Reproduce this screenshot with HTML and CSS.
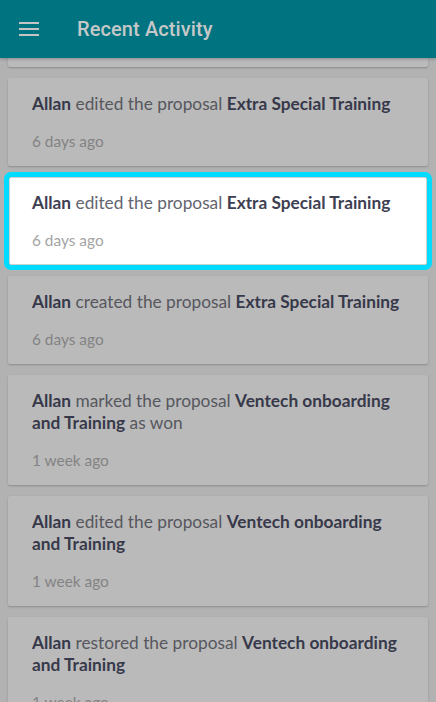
FILE: index.html
```html
<!DOCTYPE html>
<html>
<head>
<meta charset="utf-8">
<link rel="stylesheet" href="styles.css">
</head>
<body>
<header class="appbar">
  <svg class="menu" width="20" height="14" viewBox="0 0 20 14"><rect x="0" y="0" width="20" height="2"/><rect x="0" y="6" width="20" height="2"/><rect x="0" y="12" width="20" height="2"/></svg>
  <h1 class="title">Recent Activity</h1>
</header>
<main class="viewport">
  <ul class="feed">
    <li class="card"><p class="msg"><b>Allan</b> edited the proposal <b>Extra Special Training</b></p><p class="time">6 days ago</p></li>
    <li class="card"><p class="msg"><b>Allan</b> edited the proposal <b>Extra Special Training</b></p><p class="time">6 days ago</p></li>
    <li class="card card-focus"><p class="msg"><b>Allan</b> edited the proposal <b>Extra Special Training</b></p><p class="time">6 days ago</p></li>
    <li class="card"><p class="msg"><b>Allan</b> created the proposal <b>Extra Special Training</b></p><p class="time">6 days ago</p></li>
    <li class="card"><p class="msg"><b>Allan</b> marked the proposal <b>Ventech onboarding and Training</b> as won</p><p class="time">1 week ago</p></li>
    <li class="card"><p class="msg"><b>Allan</b> edited the proposal <b>Ventech onboarding and Training</b></p><p class="time">1 week ago</p></li>
    <li class="card"><p class="msg"><b>Allan</b> restored the proposal <b>Ventech onboarding and Training</b></p><p class="time">1 week ago</p></li>
  </ul>
</main>
</body>
</html>
```
FILE: styles.css
```css
html, body {
  margin: 0;
  padding: 0;
  height: 100%;
}
body {
  background: #b2b2b2;
  font-family: "Lato", "Liberation Sans", sans-serif;
  overflow: hidden;
  display: flex;
  flex-direction: column;
}
.appbar {
  height: 58px;
  flex: none;
  background: #007380;
  display: flex;
  align-items: center;
  padding-left: 19px;
  box-shadow: 0 1px 3px rgba(0,0,0,0.25);
  position: relative;
  z-index: 2;
}
.menu {
  fill: #c4c6c6;
}
.title {
  margin: 0 0 0 38px;
  font-family: Roboto, sans-serif;
  font-weight: 500;
  font-size: 20px;
  color: #c6c8c8;
  letter-spacing: 0.1px;
}
.viewport {
  flex: 1;
  overflow: hidden;
}
.feed {
  list-style: none;
  margin: -79px 0 0 0;
  padding: 0 8px;
  display: flex;
  flex-direction: column;
  gap: 11px;
}
.card {
  background: #bababa;
  border-radius: 2px;
  box-shadow: 0 1px 2px rgba(0,0,0,0.22);
  padding: 15px 24px;
  display: flex;
  flex-direction: column;
  gap: 16px;
}
.msg {
  margin: 0;
  font-size: 17.3px;
  line-height: 22px;
  color: #56575e;
}
.msg b {
  font-weight: 700;
  color: #37394a;
}
.time {
  margin: 0;
  font-size: 15.4px;
  line-height: 20px;
  color: #838383;
}
.card-focus {
  background: #ffffff;
  border: 1px solid #cfcfcf;
  padding: 14px 22px;
  margin: 0 1px;
  outline: 5px solid #00dcff;
  outline-offset: 0;
  box-shadow: none;
}
.card-focus .msg {
  color: #63656f;
}
.card-focus .msg b {
  color: #3e4052;
}
.card-focus .time {
  color: #a4a4a4;
}
```
